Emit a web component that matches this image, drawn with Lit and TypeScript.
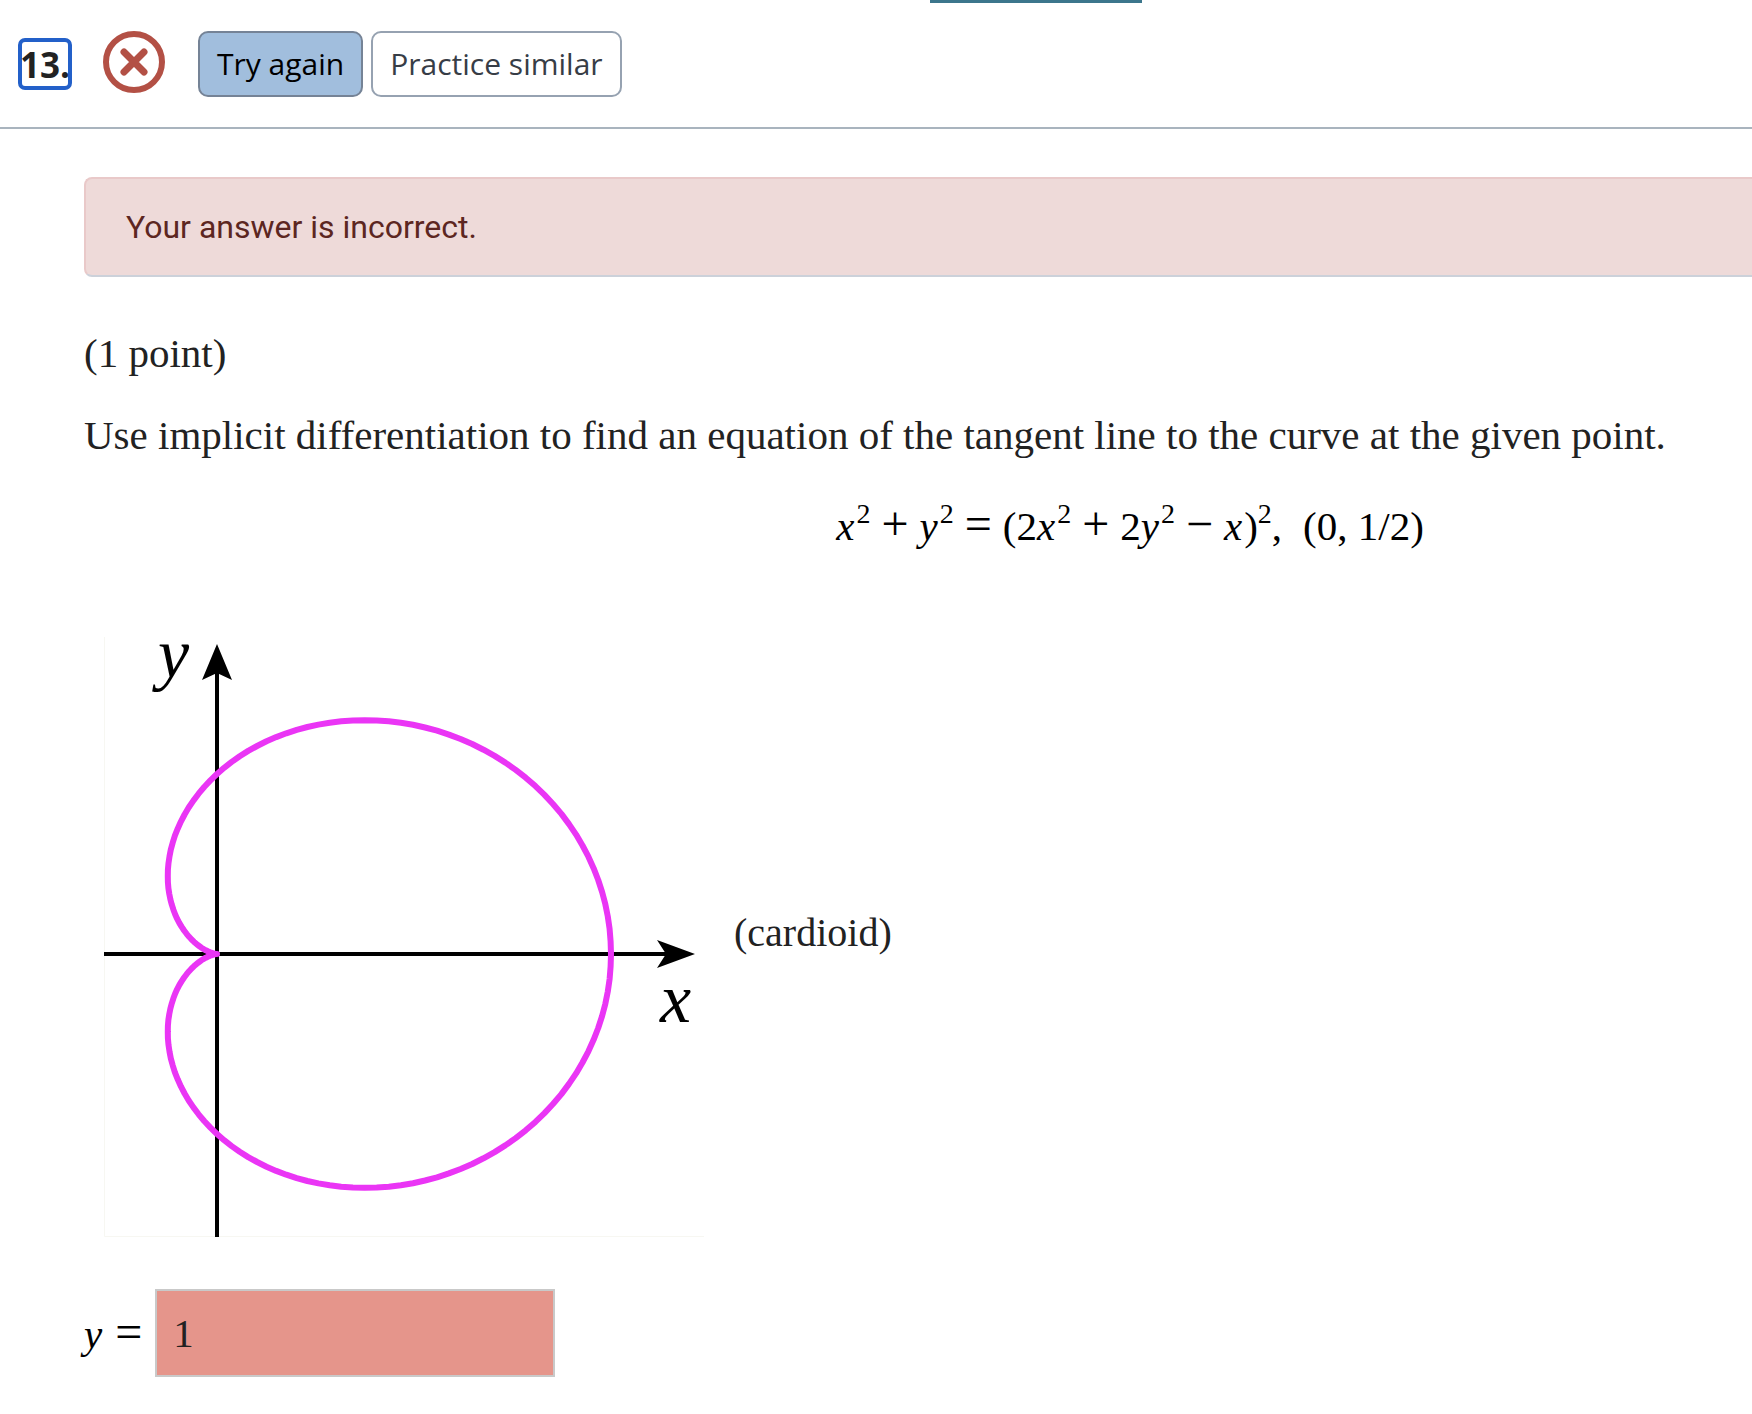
import { LitElement, html, svg, css } from "lit";
import { customElement, state } from "lit/decorators.js";

const ORIGIN_X = 113;
const ORIGIN_Y = 317;
const UNIT_X = 394;
const UNIT_Y = 360;

/** Path of r = (1 + cos t) / 2, scaled to the plot. */
function cardioid(): string {
  const steps = 180;
  const pts: string[] = [];
  for (let i = 0; i <= steps; i++) {
    const t = -Math.PI + (2 * Math.PI * i) / steps;
    const r = (1 + Math.cos(t)) / 2;
    const x = ORIGIN_X + UNIT_X * r * Math.cos(t);
    const y = ORIGIN_Y - UNIT_Y * r * Math.sin(t);
    pts.push(`${x.toFixed(1)} ${y.toFixed(1)}`);
  }
  return "M" + pts.join("L");
}

@customElement("question-header")
class QuestionHeader extends LitElement {
  static styles = css`
    :host { display: block; }
    .bar {
      display: flex;
      align-items: center;
      padding: 28px 18px 30px;
      border-bottom: 2px solid #a9b4be;
      font-family: "Open Sans", sans-serif;
    }
    .tab { height: 3px; width: 212px; margin-left: 930px; background: #3c768c; }
    .number {
      display: flex;
      align-items: center;
      justify-content: center;
      box-sizing: border-box;
      width: 54px;
      height: 52px;
      padding-top: 2px;
      border: 4px solid #2360c9;
      border-radius: 7px;
      font-size: 35px;
      font-weight: 700;
      color: #222;
    }
    .mark { width: 62px; height: 62px; margin: 0 33px 4px 31px; display: block; }
    .actions { display: flex; gap: 8px; }
    .btn {
      height: 66px;
      padding: 0 17px 2px;
      border: 2px solid #96a2b1;
      border-radius: 10px;
      background: #fff;
      color: #373d46;
      font: 30px "Open Sans", sans-serif;
    }
    .primary { background: #a1bedd; border-color: #758396; color: #000; }
  `;
  render() {
    return html`
      <div class="tab"></div>
      <header class="bar">
        <div class="number">13.</div>
        <svg class="mark" viewBox="0 0 62 62" role="img" aria-label="Incorrect">
          <circle cx="31" cy="31" r="28" fill="none" stroke="#b35045" stroke-width="6" />
          <path d="M21 21L41 41M41 21L21 41" stroke="#b35045" stroke-width="7" stroke-linecap="round" />
        </svg>
        <div class="actions">
          <button class="btn primary" type="button">Try again</button>
          <button class="btn" type="button">Practice similar</button>
        </div>
      </header>
    `;
  }
}

@customElement("cardioid-plot")
class CardioidPlot extends LitElement {
  static styles = css`
    :host { display: block; }
    .plot { display: block; width: 600px; height: 600px; overflow: visible; }
    .name { font: italic 70px "Liberation Serif", serif; fill: #000; }
  `;
  render() {
    return html`
      <svg class="plot" viewBox="0 0 600 600" role="img" aria-label="Cardioid">
        <path d="M.5 0V599.5H600" fill="none" stroke="#f7f7f2" />
        ${svg`
          <path d="M0 317H565M113 600V30" fill="none" stroke="#000" stroke-width="4" />
          <path d="M113 7L128 43L113 36L98 43Z" />
          <path d="M591 317L553 331L562 317L553 303Z" />
          <path d=${cardioid()} fill="none" stroke="#ea35f5" stroke-width="6" stroke-linejoin="round" />
          <circle cx="113" cy="317" r="3" fill="#ea35f5" />
          <text class="name" x="54" y="40">y</text>
          <text class="name" x="556" y="385">x</text>
        `}
      </svg>
    `;
  }
}

@customElement("app-root")
class AppRoot extends LitElement {
  static styles = css`
    :host {
      display: block;
      min-height: 100vh;
      overflow: hidden;
      background: #fff;
      color: #222;
      font: 40px/48px "Liberation Serif", serif;
    }
    .body { padding: 48px 0 0 84px; }
    .alert {
      display: flex;
      align-items: center;
      box-sizing: border-box;
      min-height: 100px;
      padding: 0 40px;
      border: 2px solid #e9c9c9;
      border-right: 0;
      border-bottom-color: #ccd1da;
      border-radius: 8px 0 0 8px;
      background: #eedad9;
      color: #5c2621;
      font: 32px/40px Roboto, sans-serif;
    }
    p { margin: 0; font-size: 41px; }
    .points { margin-top: 52px; }
    .prompt { margin-top: 34px; }
    .math { display: flex; align-items: baseline; gap: 11px; color: #000; font-size: 41px; white-space: nowrap; }
    .math sup { font-size: 28px; line-height: 0; vertical-align: 17px; }
    .math i { padding-right: 2px; }
    .op { font-size: 48px; line-height: 48px; }
    .display { justify-content: center; margin: 41px 0 0 424px; }
    .at { margin-left: 10px; }
    .figure { display: flex; align-items: center; gap: 30px; margin: 87px 0 0 20px; }
    .caption { padding-bottom: 8px; }
    .answer { display: flex; align-items: center; gap: 13px; margin-top: 52px; }
    .box {
      box-sizing: border-box;
      width: 400px;
      height: 88px;
      padding: 0 16px;
      border: 2px solid #c9c9c9;
      border-radius: 0;
      background: #e5958b;
      color: #222;
      font: 41px "Liberation Serif", serif;
    }
  `;

  @state() private answer = "1";

  render() {
    return html`
      <question-header></question-header>
      <main class="body">
        <div class="alert" role="alert">Your answer is incorrect.</div>
        <p class="points">(1 point)</p>
        <p class="prompt">Use implicit differentiation to find an equation of the tangent line to the curve at the given point.</p>
        <div class="math display">
          <span><i>x</i><sup>2</sup></span><span class="op">+</span><span><i>y</i><sup>2</sup></span><span class="op">=</span>
          <span>(2<i>x</i><sup>2</sup></span><span class="op">+</span><span>2<i>y</i><sup>2</sup></span><span class="op">−</span>
          <span><i>x</i>)<sup>2</sup>,</span><span class="at">(0, 1/2)</span>
        </div>
        <div class="figure"><cardioid-plot></cardioid-plot><span class="caption">(cardioid)</span></div>
        <div class="answer">
          <label class="math" for="answer"><i>y</i><span class="op">=</span></label>
          <input class="box" id="answer" type="text" .value=${this.answer}
            @input=${(e: Event) => { this.answer = (e.target as HTMLInputElement).value; }} />
        </div>
      </main>
    `;
  }
}
